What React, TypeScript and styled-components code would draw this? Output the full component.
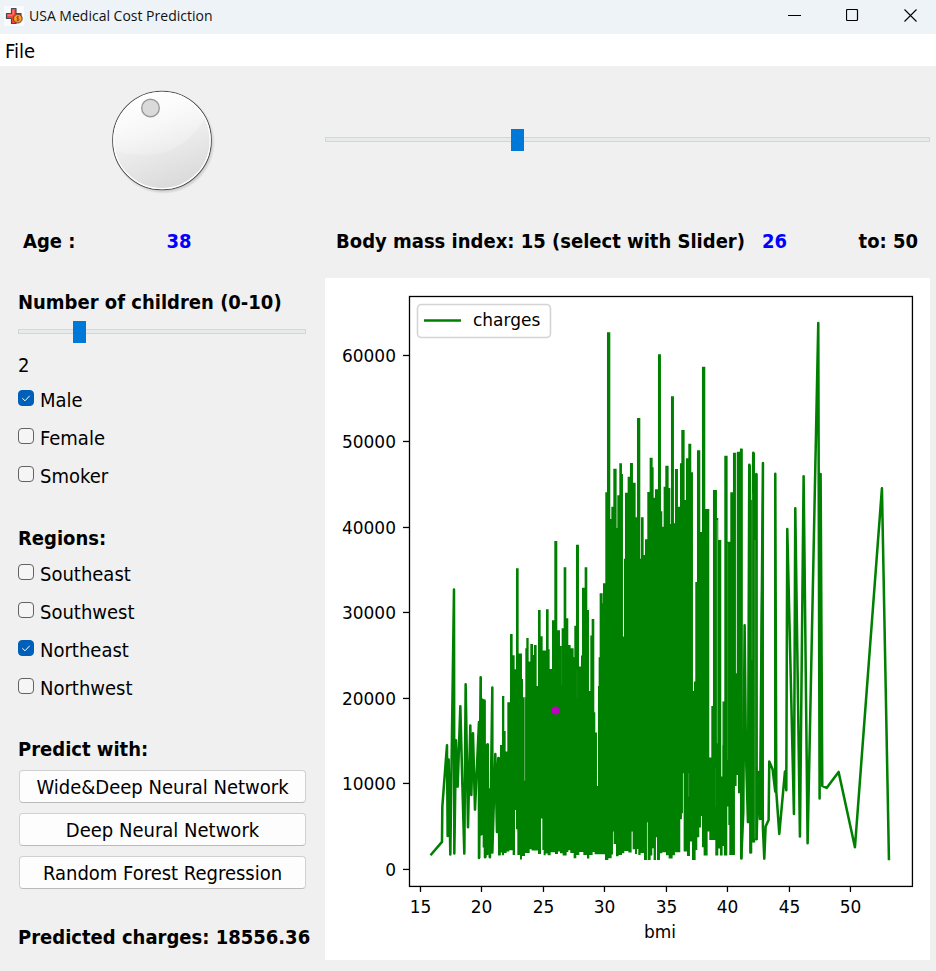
import React, { useState } from "react";
import styled, { createGlobalStyle } from "styled-components";

const uiFont = `"DejaVu Sans Condensed", "DejaVu Sans", Tahoma, sans-serif`;

const GlobalStyle = createGlobalStyle`
  *, *::before, *::after { box-sizing: border-box; }
  html { background: #f0f0f0; }
  body { margin: 0; background: #f0f0f0; color: #000; font: 20px/24px ${uiFont}; }
  button, input { font: inherit; color: inherit; margin: 0; }
`;

const Window = styled.div`
  min-height: 100vh;
  display: flex;
  flex-direction: column;
`;

const TitleBar = styled.header`
  display: flex;
  align-items: center;
  height: 34px;
  padding: 0 1px 2px 4px;
  gap: 5px;
  background: #eef3f8;
`;

const AppIcon = styled.svg`
  width: 20px;
  height: 20px;
  background: #f8fafc;
`;

const AppTitle = styled.h1`
  flex: 1;
  margin: 0;
  font: 400 14px/20px "Open Sans", "Noto Sans", sans-serif;
  color: #111;
`;

const CaptionButtons = styled.div`
  display: flex;
  align-self: stretch;
`;

const CaptionButton = styled.button`
  display: grid;
  place-items: center;
  width: 58px;
  padding: 0 0 2px 8px;
  border: 0;
  background: none;
`;

const MenuBar = styled.nav`
  display: flex;
  height: 32px;
  padding: 2px 0 0 5px;
  background: #fff;
`;

const MenuButton = styled.button`
  padding: 0;
  border: 0;
  background: none;
`;

const Content = styled.main`
  display: grid;
  grid-template-columns: minmax(0, 10fr) minmax(0, 21fr);
  grid-template-rows: 148px auto auto;
  column-gap: 19px;
  padding: 0 6px 11px 18px;
`;

const DialCell = styled.div`
  display: flex;
  align-items: center;
  justify-content: center;
`;

const DialLabel = styled.label`
  display: grid;
  width: 108px;
  height: 108px;
  & > * { grid-area: 1 / 1; width: 100%; height: 100%; }
`;

const DialInput = styled.input`
  opacity: 0;
  cursor: pointer;
`;

const SliderCell = styled.div`
  display: flex;
  align-items: center;
`;

const Slider = styled.input`
  appearance: none;
  display: block;
  width: 100%;
  height: 22px;
  background: linear-gradient(#e7eaea, #e7eaea) center 9px / calc(100% - 2px) 3px no-repeat,
    linear-gradient(#d6d6d6, #d6d6d6) center 8px / 100% 5px no-repeat;

  &::-webkit-slider-thumb {
    appearance: none;
    width: 13px;
    height: 22px;
    border: 0;
    border-radius: 0;
    background: #0078d7;
  }
`;

const ReadoutRow = styled.div`
  display: flex;
  align-items: center;
  height: 64px;
  padding-bottom: 10px;
  font-weight: 700;
  white-space: nowrap;
`;

const AgeRow = styled(ReadoutRow)`
  display: grid;
  grid-template-columns: 1fr 1fr;
  column-gap: 4px;
  padding-left: 5px;
`;

const BmiRow = styled(ReadoutRow)`
  gap: 17px;
  padding-left: 11px;
  padding-right: 12px;
`;

const Value = styled.output`
  color: #0000ff;
`;

const RangeEnd = styled.span`
  margin-left: auto;
`;

const Controls = styled.section`
  display: flex;
  flex-direction: column;
  padding-top: 12px;
`;

const Group = styled.fieldset<{ $top: number }>`
  display: flex;
  flex-direction: column;
  min-width: 0;
  margin: ${(p) => p.$top}px 0 0;
  padding: 0;
  border: 0;
`;

const Heading = styled.div`
  font-weight: 700;
  white-space: nowrap;
`;

const ChildrenSlider = styled(Slider)`
  margin: 7px 0 10px;
`;

const CheckRow = styled.label`
  display: flex;
  align-items: center;
  gap: 6px;
  height: 38px;
`;

const CheckMark = styled.span`
  display: grid;
  width: 16px;
  height: 16px;
  & > * { grid-area: 1 / 1; }
`;

const CheckInput = styled.input`
  appearance: none;
  width: 16px;
  height: 16px;
  border: 1px solid #626262;
  border-radius: 4px;
  background: #f5f5f5;

  &:checked { border-color: #005fb8; background: #005fb8; }
  & + svg { visibility: hidden; pointer-events: none; }
  &:checked + svg { visibility: visible; }
`;

const CheckText = styled.span`
  padding-top: 3px;
`;

const RegionList = styled.div`
  padding-top: 3px;
`;

const ButtonStack = styled.div`
  display: flex;
  flex-direction: column;
  gap: 10px;
  padding: 9px 0 0 1px;
`;

const PredictButton = styled.button`
  height: 33px;
  padding: 0 4px;
  border: 1px solid #d0d0d0;
  border-bottom-color: #bababa;
  border-radius: 4px;
  background: #fdfdfd;
  white-space: nowrap;
`;

const Result = styled.div`
  margin-top: 36px;
  font-weight: 700;
  white-space: nowrap;
`;

const ChartPanel = styled.figure`
  margin: 0;
  background: #fff;
`;

const ChartSvg = styled.svg`
  display: block;
  width: 100%;
  height: auto;
  font-family: "DejaVu Sans", sans-serif;
  font-size: 17px;
  fill: #000;
`;

type Point = [number, number];

/* Chart samples are kept in thirds of a pixel, relative to the plot's lower-left region. */
const lowBmi: Point[] = [
  [94, 883], [126, 846], [127, 740], [141, 556], [143, 828], [146, 599], [151, 884], [162, 89], [163, 881],
  [168, 541], [173, 680], [181, 439], [187, 670], [193, 881], [197, 373], [204, 802], [211, 497], [214, 705],
  [219, 520], [225, 749], [237, 486], [237, 894], [242, 352], [243, 824], [247, 419], [253, 424], [255, 892],
  [263, 553], [262, 882], [267, 689], [270, 892], [277, 383], [277, 878], [286, 582], [291, 816], [291, 691],
  [295, 594], [298, 883],
];

const highBmi: Point[] = [
  [1024, -331], [1024, 896], [1030, 758], [1034, 196], [1038, 580], [1044, 786], [1048, -286], [1052, 878],
  [1060, -322], [1061, 843], [1069, -258], [1070, 838], [1075, 636], [1080, 777], [1089, -291], [1087, 620],
  [1089, 807], [1093, 896], [1097, 800], [1106, 780], [1108, 605], [1118, 628], [1126, 695], [1126, -259],
  [1129, 695], [1138, 822], [1155, 635], [1159, 691], [1162, -93], [1182, 762], [1186, -155], [1200, 830],
  [1211, -251], [1223, 850], [1255, -711], [1259, 716], [1262, -258], [1267, 678], [1280, 684], [1316, 636],
  [1365, 862], [1446, -215], [1467, 897],
];

/* Upper edge of the dense band: each entry starts a flat step at x. */
const upper: Point[] = [
  [291, 691], [295, 592], [300, 555], [306, 408], [313, 513], [317, 575], [322, 427], [330, 222], [338, 286],
  [344, 328], [348, 25], [356, 281], [366, 357], [369, 412], [376, 265], [379, 234], [386, 305], [391, 252],
  [399, 285], [402, 255], [410, 378], [414, 150], [422, 229], [428, 272], [438, 148], [446, 268], [449, 327],
  [456, 181], [463, -57], [472, 211], [480, 258], [485, 205], [491, 22], [499, 175], [505, 255], [512, 265],
  [521, 292], [523, 197], [528, -46], [537, 320], [543, 287], [546, 83], [554, 22], [562, 150], [567, 393],
  [571, 227], [575, 177], [583, 457], [586, 518], [591, 678], [594, 378], [596, 292], [599, 100], [608, 130],
  [609, 70], [616, -203], [621, -683], [631, -123], [634, -160], [640, -274], [650, -96], [652, -194],
  [658, -290], [666, -258], [669, 230], [672, -4], [675, -202], [683, -250], [690, -291], [699, -232],
  [707, -128], [711, -426], [721, -4], [723, -128], [731, -15], [735, -62], [742, -204], [749, -307],
  [758, -278], [761, -187], [765, -212], [774, -617], [783, -146], [787, -100], [791, -220], [796, -283],
  [806, -216], [811, -108], [813, -491], [822, -110], [825, -273], [834, -160], [840, -290], [844, -390],
  [854, -180], [858, -305], [865, -349], [874, -263], [879, 393], [882, 365], [886, 66], [891, -329],
  [901, -84], [906, -580], [916, -153], [928, 593], [934, 438], [939, -210], [951, -126], [955, -60],
  [964, 650], [967, 425], [973, -313], [983, -55], [991, -203], [999, -322], [1009, 340], [1011, -325],
  [1020, -333],
];

/* Lower edge of the dense band, in the same step form. */
const lower: Point[] = [
  [291, 817], [295, 885], [302, 878], [306, 886], [312, 879], [320, 875], [328, 871], [338, 885], [345, 750],
  [348, 808], [352, 885], [360, 899], [366, 888], [375, 879], [389, 868], [395, 872], [414, 882], [423, 776],
  [427, 870], [431, 886], [437, 881], [443, 886], [452, 877], [465, 882], [474, 875], [480, 880], [488, 887],
  [500, 876], [505, 871], [511, 879], [521, 895], [529, 885], [538, 876], [550, 885], [561, 896], [568, 885],
  [578, 876], [584, 883], [615, 900], [625, 895], [635, 884], [639, 815], [641, 852], [648, 889], [656, 885],
  [666, 880], [673, 873], [685, 878], [695, 815], [698, 868], [705, 882], [711, 867], [715, 885], [722, 879],
  [732, 900], [741, 787], [743, 900], [752, 887], [757, 865], [761, 900], [768, 832], [771, 900], [780, 880],
  [787, 877], [798, 886], [806, 896], [818, 886], [825, 877], [841, 778], [846, 760], [849, 640], [851, 875],
  [861, 888], [870, 845], [876, 900], [887, 870], [892, 832], [898, 803], [903, 768], [906, 862], [911, 887],
  [923, 815], [928, 840], [946, 887], [955, 866], [960, 887], [968, 858], [972, 887], [982, 740], [985, 795],
  [988, 885], [1005, 678], [1010, 645], [1014, 700], [1020, 896],
];

/* Narrow slits where the band shows the background through: x, top, bottom, opacity. */
const slits: [number, number, number, number][] = [
  [374, 412, 662, 0.6], [485, 260, 375, 0.15], [531, 330, 415, 0.1], [866, 640, 710, 0.3],
  [947, 625, 740, 0.12], [952, -120, 550, 0.6], [968, 425, 556, 0.5], [983, -50, 600, 0.25],
  [1009, -320, 340, 0.4],
];

const lateSlits: [number, number, number, number][] = [
  [1056, -200, 300, 0.3], [1065, -60, 835, 0.35], [1071, 0, 620, 0.1],
];

const toLine = (pts: Point[]) => pts.map(([x, y]) => `${x},${y}`).join(" ");

const toSteps = (pts: Point[], end: number): Point[] =>
  pts.flatMap(([x, y], i): Point[] => [[x, y], [i + 1 < pts.length ? pts[i + 1][0] : end, y]]);

const toBand = (top: Point[], bottom: Point[], end: number) =>
  toLine([...toSteps(top, end), ...toSteps(bottom, end).reverse()]);

const bands = [
  toBand(upper, lower, 1028),
  toBand(
    [[238, 486], [240, 352], [246, 419], [257, 553], [267, 689]],
    [[238, 894], [241, 825], [248, 863], [253, 893], [260, 882], [266, 893]],
    273,
  ),
  toBand(
    [[1045, -286], [1053, -180], [1056, -322], [1065, -258]],
    [[1045, 790], [1048, 880], [1057, 848], [1066, 840]],
    1073,
  ),
  toLine([[1087, -290], [1092, -290], [1092, 780], [1080, 780], [1082, 200]]),
];

const xTicks = [15, 20, 25, 30, 35, 40, 45, 50];
const yTicks = [0, 10000, 20000, 30000, 40000, 50000, 60000];
const tickX = (v: number) => Math.round(95 + (v - 15) * 12.29) + 0.5;
const tickY = (v: number) => Math.round(591 - v * 0.00856) + 0.5;

function Slits({ items }: { items: [number, number, number, number][] }) {
  return (
    <g fill="none" stroke="#fff" strokeWidth="2">
      {items.map(([x, top, bottom, opacity]) => (
        <line key={x} x1={x} x2={x} y1={top} y2={bottom} strokeOpacity={opacity} />
      ))}
    </g>
  );
}

function Chart() {
  return (
    <ChartPanel>
      <ChartSvg viewBox="0 0 605 682" role="img" aria-label="Charges by bmi">
        <g transform="translate(75 282) scale(0.33333)" fill="#008000" stroke="none">
          {bands.map((points) => <polygon key={points} points={points} />)}
          <Slits items={slits} />
          <g fill="none" stroke="#008000" strokeWidth="7.6" strokeLinejoin="round" strokeLinecap="square">
            <polyline points={toLine(lowBmi)} />
            <polyline points={toLine(highBmi)} />
          </g>
          <Slits items={lateSlits} />
        </g>
        <circle cx="230.5" cy="432.5" r="4" fill="#bf00bf" />
        <rect x="84.5" y="18.5" width="503" height="590" fill="none" stroke="#000" strokeWidth="1.3" />
        <g stroke="#000" strokeWidth="1.3">
          {xTicks.map((v) => <line key={v} x1={tickX(v)} x2={tickX(v)} y1="608" y2="614" />)}
          {yTicks.map((v) => <line key={v} x1="78" x2="84" y1={tickY(v)} y2={tickY(v)} />)}
        </g>
        <g textAnchor="middle">
          {xTicks.map((v) => <text key={v} x={tickX(v)} y="635">{v}</text>)}
          <text x="335" y="660">bmi</text>
        </g>
        <g textAnchor="end">
          {yTicks.map((v) => <text key={v} x="71" y={tickY(v) + 7}>{v}</text>)}
        </g>
        <rect x="92.5" y="26.5" width="133" height="33" rx="4" fill="#fff" stroke="#d4d4d4" strokeWidth="1.6" />
        <line x1="99" x2="136" y1="42.5" y2="42.5" stroke="#008000" strokeWidth="2.6" />
        <text x="148" y="48">charges</text>
      </ChartSvg>
    </ChartPanel>
  );
}

function DialFace() {
  return (
    <svg viewBox="0 0 108 108" aria-hidden="true">
      <defs>
        <radialGradient id="shade" cx="0.5" cy="0.5" r="0.5">
          <stop offset="0.9" stopColor="#000" stopOpacity="0.22" />
          <stop offset="1" stopColor="#000" stopOpacity="0" />
        </radialGradient>
        <linearGradient id="face" x1="0.35" y1="0" x2="0.7" y2="1">
          <stop offset="0" stopColor="#ffffff" />
          <stop offset="0.5" stopColor="#ececec" />
          <stop offset="1" stopColor="#d8d8d8" />
        </linearGradient>
        <linearGradient id="gloss" x1="0.3" y1="0" x2="0.6" y2="1">
          <stop offset="0" stopColor="#fff" stopOpacity="0.7" />
          <stop offset="1" stopColor="#fff" stopOpacity="0.15" />
        </linearGradient>
        <clipPath id="disc"><circle cx="54" cy="55" r="48" /></clipPath>
      </defs>
      <circle cx="55.5" cy="56.5" r="51.5" fill="url(#shade)" />
      <circle cx="54" cy="54.5" r="49.3" fill="url(#face)" stroke="#4c4c4c" strokeWidth="1.1" />
      <circle cx="54" cy="54.5" r="48.2" fill="none" stroke="#fff" strokeWidth="1.3" />
      <path d="M0 60 Q10 69 40 69 Q78 67 98 30 L98 0 L0 0 Z" fill="url(#gloss)" clipPath="url(#disc)" />
      <circle cx="42.5" cy="22" r="8.8" fill="#dadada" stroke="#9a9a9a" strokeWidth="1.4" />
    </svg>
  );
}

function Check({ label, initial = false }: { label: string; initial?: boolean }) {
  const [on, setOn] = useState(initial);
  return (
    <CheckRow>
      <CheckMark>
        <CheckInput type="checkbox" checked={on} onChange={(e) => setOn(e.target.checked)} />
        <svg width="16" height="16" viewBox="0 0 16 16" aria-hidden="true">
          <path d="M4.3 8.2 L7 10.8 L11.7 5.8" fill="none" stroke="#fff" strokeWidth="1" />
        </svg>
      </CheckMark>
      <CheckText>{label}</CheckText>
    </CheckRow>
  );
}

export default function App() {
  const [age, setAge] = useState(38);
  const [bmi, setBmi] = useState(26);
  const [children, setChildren] = useState(2);

  return (
    <Window>
      <GlobalStyle />
      <TitleBar>
        <AppIcon viewBox="0 0 20 20" aria-hidden="true">
          <path
            d="M7.5 2.5h4.5v5h5v5h-5v5H7.5v-5h-5v-5h5z"
            fill="#f0483e" stroke="#454b57" strokeWidth="1.2" strokeLinejoin="round"
          />
          <path d="M8.4 3.4h1.8v5h-1.8zM3.4 8.4h5v1.6h-5z" fill="#ff7468" />
          <circle cx="13.8" cy="12.6" r="4.4" fill="#f7931e" stroke="#5a4636" strokeWidth="1" />
          <circle cx="13.8" cy="12.6" r="2.8" fill="#ffab2e" />
          <path
            d="M15.2 11.3c-.6-.7-2.6-.7-2.6.3 0 1.1 2.6.8 2.6 2 0 1.1-2.1 1.1-2.8.3M13.8 10v5.3"
            fill="none" stroke="#a8341c" strokeWidth="0.9"
          />
        </AppIcon>
        <AppTitle>USA Medical Cost Prediction</AppTitle>
        <CaptionButtons>
          <CaptionButton aria-label="Minimize">
            <svg width="13" height="13" viewBox="0 0 13 13"><path d="M0 6.5h13" stroke="#000" /></svg>
          </CaptionButton>
          <CaptionButton aria-label="Maximize">
            <svg width="13" height="13" viewBox="0 0 13 13">
              <rect x="0.5" y="0.5" width="11" height="11" rx="1" fill="none" stroke="#000" strokeWidth="1.2" />
            </svg>
          </CaptionButton>
          <CaptionButton aria-label="Close">
            <svg width="13" height="13" viewBox="0 0 13 13">
              <path d="M0.5 0.5l12 12M12.5 0.5l-12 12" stroke="#000" strokeWidth="1.1" />
            </svg>
          </CaptionButton>
        </CaptionButtons>
      </TitleBar>
      <MenuBar>
        <MenuButton>File</MenuButton>
      </MenuBar>
      <Content>
        <DialCell>
          <DialLabel>
            <DialFace />
            <DialInput
              type="range" aria-label="Age" min={18} max={100} value={age}
              onChange={(e) => setAge(Number(e.target.value))}
            />
          </DialLabel>
        </DialCell>
        <SliderCell>
          <Slider
            type="range" aria-label="Body mass index" min={15} max={50} value={bmi}
            onChange={(e) => setBmi(Number(e.target.value))}
          />
        </SliderCell>
        <AgeRow>
          <span>Age :</span>
          <Value>{age}</Value>
        </AgeRow>
        <BmiRow>
          <span>Body mass index: 15 (select with Slider)</span>
          <Value>{bmi}</Value>
          <RangeEnd>to: 50</RangeEnd>
        </BmiRow>
        <Controls>
          <Heading as="label" htmlFor="children">Number of children (0-10)</Heading>
          <ChildrenSlider
            id="children" type="range" min={0} max={10} value={children}
            onChange={(e) => setChildren(Number(e.target.value))}
          />
          <output htmlFor="children">{children}</output>
          <Group $top={2} aria-label="Patient">
            <Check label="Male" initial />
            <Check label="Female" />
            <Check label="Smoker" />
          </Group>
          <Group $top={33} aria-label="Regions">
            <Heading>Regions:</Heading>
            <RegionList>
              <Check label="Southeast" />
              <Check label="Southwest" />
              <Check label="Northeast" initial />
              <Check label="Northwest" />
            </RegionList>
          </Group>
          <Group $top={32} aria-label="Predict with">
            <Heading>Predict with:</Heading>
            <ButtonStack>
              <PredictButton>Wide&amp;Deep Neural Network</PredictButton>
              <PredictButton>Deep Neural Network</PredictButton>
              <PredictButton>Random Forest Regression</PredictButton>
            </ButtonStack>
          </Group>
          <Result>Predicted charges: 18556.36</Result>
        </Controls>
        <Chart />
      </Content>
    </Window>
  );
}
